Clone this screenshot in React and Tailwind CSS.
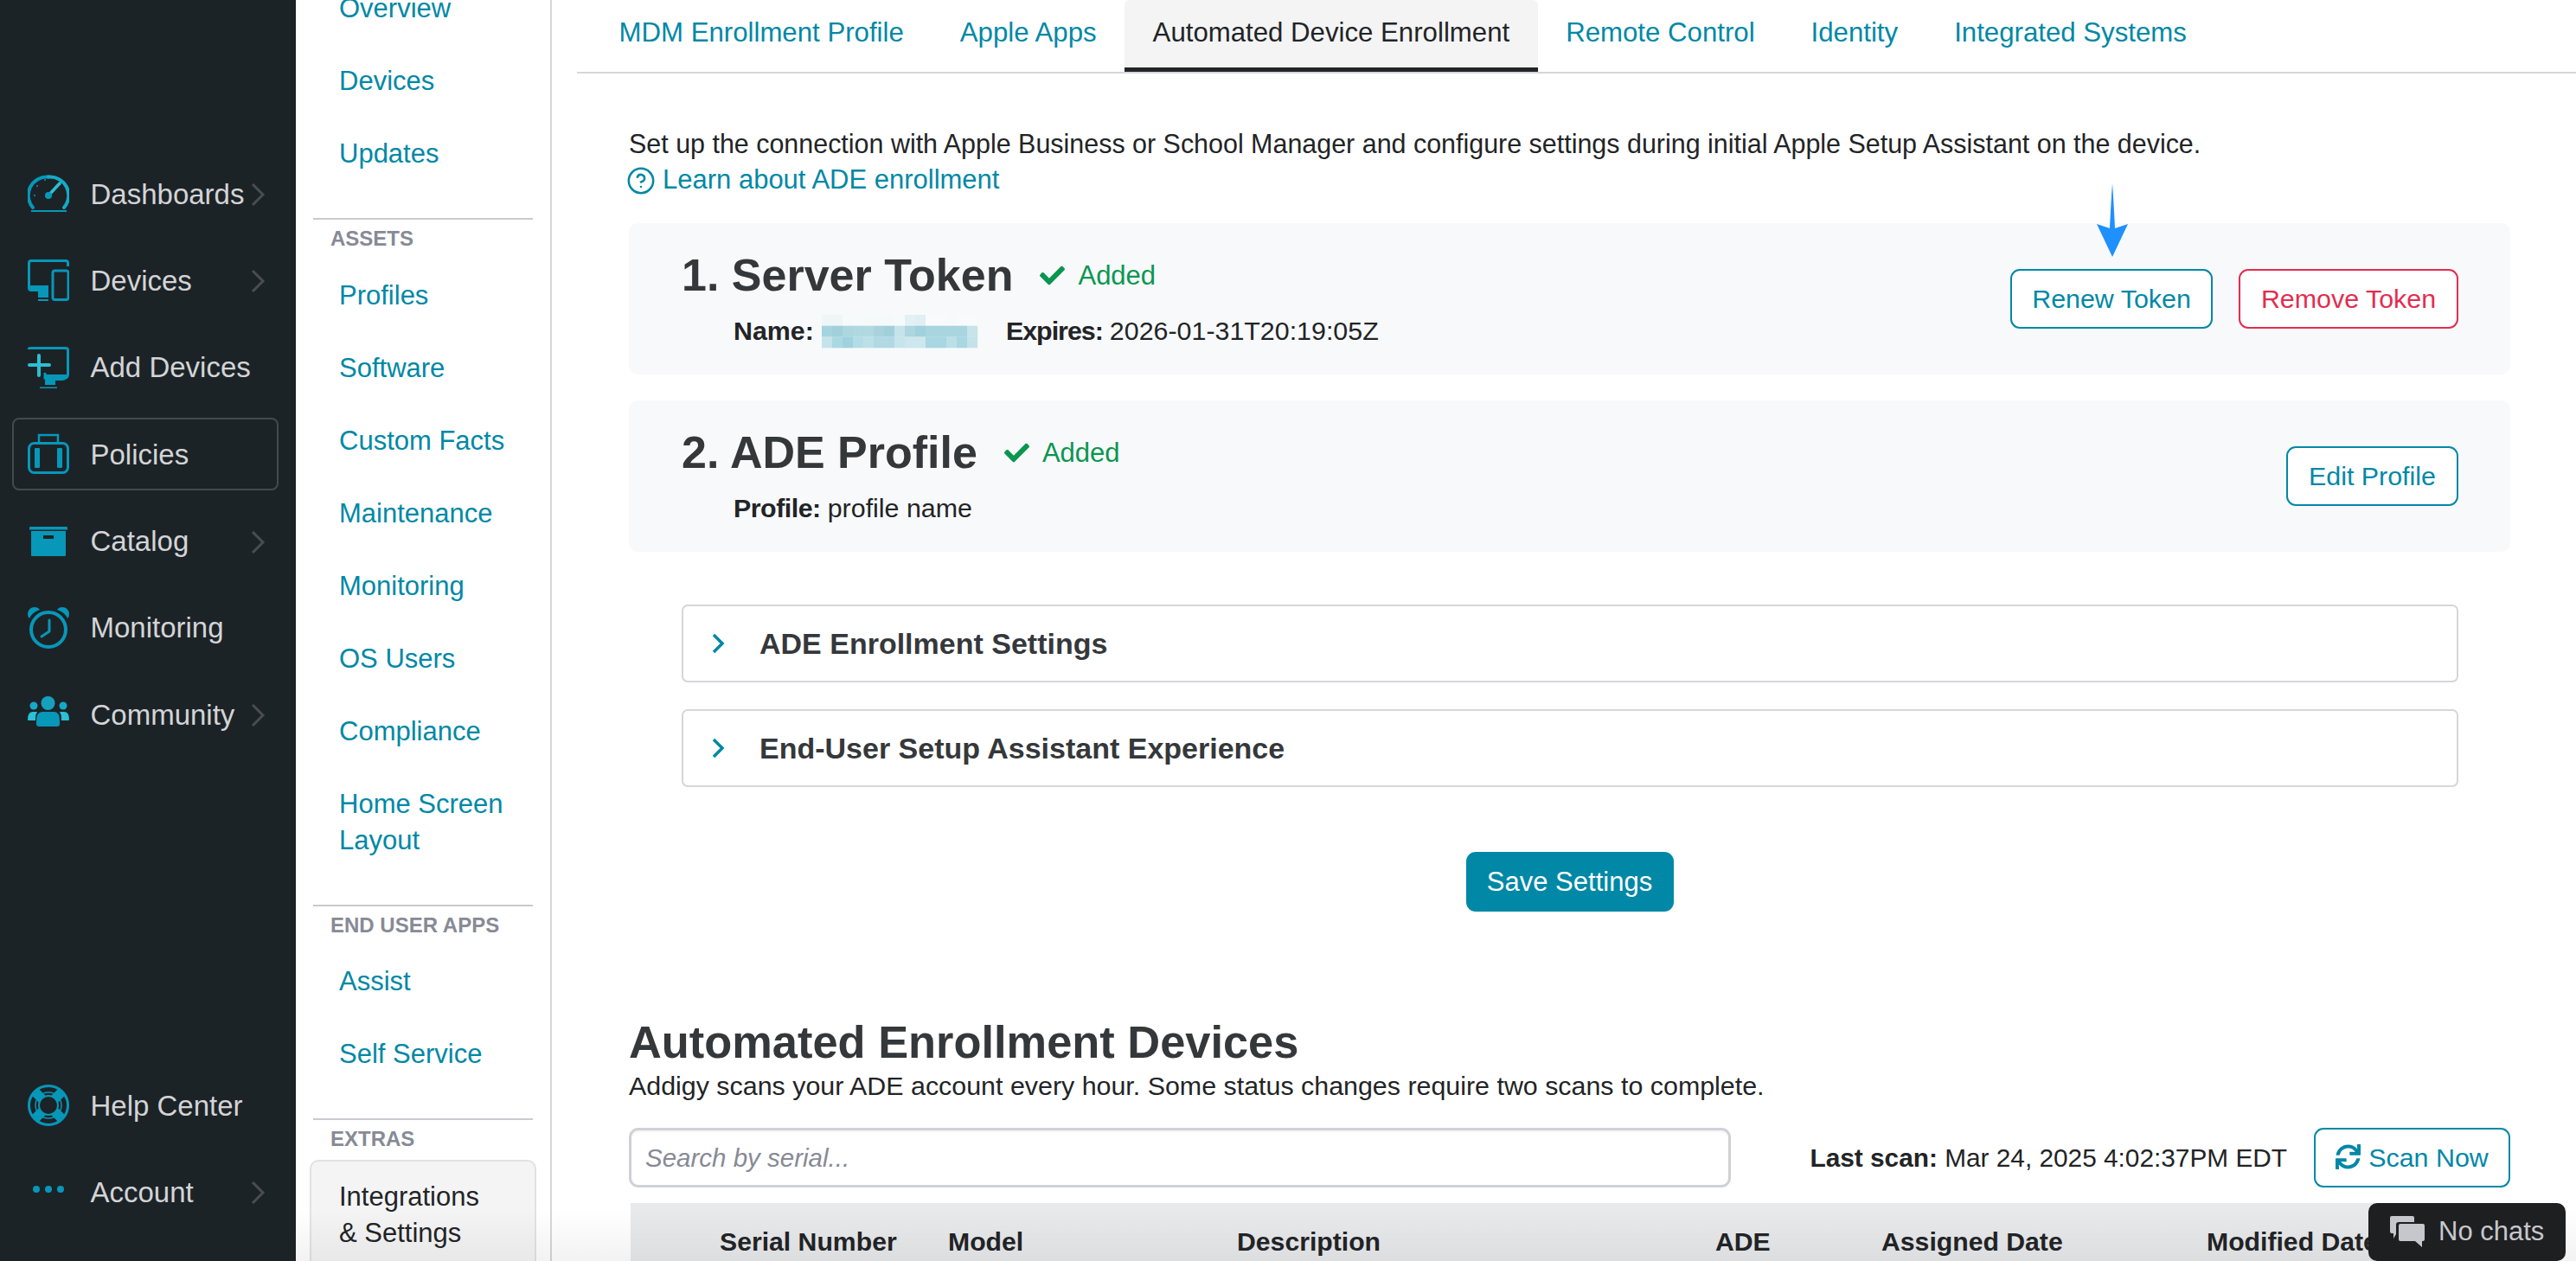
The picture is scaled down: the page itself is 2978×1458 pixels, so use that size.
import { CircleHelp } from 'lucide-react';
import { FaCheck, FaSync } from 'react-icons/fa';

const INK = '#35383b';

// sidebar icons are all drawn in a 48 box
function DashIcon() {
  return (
    <svg width="48" height="48" viewBox="0 0 48 48" fill="none">
      <path d="M6 40 A21.5 21.5 0 0 1 24 4.5" stroke="#0797b9" strokeWidth="4" strokeLinecap="round" />
      <path d="M24 4.5 A21.5 21.5 0 0 1 42 40" stroke="#16a9c6" strokeWidth="4" strokeLinecap="round" />
      <path d="M24 26 L37 12" stroke="#2bc0d4" strokeWidth="3.5" strokeLinecap="round" />
      <circle cx="24" cy="26" r="4" fill="#0797b9" />
      <circle cx="20" cy="8" r="1" fill="#0797b9" />
      <circle cx="11" cy="15" r="1" fill="#0797b9" />
      <circle cx="8" cy="26" r="1" fill="#0797b9" />
      <path d="M4 44 H45" stroke="#0797b9" strokeWidth="2" />
    </svg>
  );
}

function DevicesIcon() {
  return (
    <svg width="48" height="48" viewBox="0 0 48 48" fill="none">
      <path d="M1.5 30 V4 Q1.5 1.5 4 1.5 H44 Q46.5 1.5 46.5 4 V8" stroke="#0797b9" strokeWidth="3" />
      <path d="M0 30 H24 V44 H12 V37 H4 Q0 37 0 33 Z" fill="#0797b9" />
      <path d="M12 47 H24" stroke="#0797b9" strokeWidth="2" />
      <rect x="29" y="13" width="18" height="33.5" rx="2.5" stroke="#0797b9" strokeWidth="3" />
    </svg>
  );
}

function AddDevicesIcon() {
  return (
    <svg width="48" height="48" viewBox="0 0 48 48" fill="none">
      <path d="M1 3 Q1 1.5 4 1.5 H44 Q46.5 1.5 46.5 4 V32 Q46.5 36 42 36 H20 V30" stroke="#0797b9" strokeWidth="3" />
      <path d="M20 32 H46 Q46 39 40 39 H32 V44 H20 Z" fill="#0797b9" />
      <path d="M14 47.5 H34" stroke="#0797b9" strokeWidth="2" />
      <path d="M2 21 H25 M13 10 V33" stroke="#2bc0d4" strokeWidth="4" strokeLinecap="round" />
    </svg>
  );
}

function PoliciesIcon() {
  return (
    <svg width="48" height="48" viewBox="0 0 48 48" fill="none">
      <path d="M13 11 V2 H35 V11" stroke="#0797b9" strokeWidth="2.5" />
      <rect x="1.5" y="11.5" width="45" height="34" rx="6" stroke="#0797b9" strokeWidth="3" />
      <rect x="8" y="17" width="6" height="23" rx="1" fill="#0797b9" />
      <rect x="34" y="17" width="6" height="23" rx="1" fill="#0797b9" />
    </svg>
  );
}

function CatalogIcon() {
  return (
    <svg width="48" height="48" viewBox="0 0 48 48" fill="none">
      <path d="M2 8 Q2 7 3 7 H45 Q46 7 46 8 V10.5 H2 Z" fill="#0797b9" />
      <path d="M4 12 H44 V40 Q44 41 43 41 H5 Q4 41 4 40 Z" fill="#0797b9" />
      <rect x="18" y="17" width="12" height="4" fill="#1c2327" />
    </svg>
  );
}

function MonitoringIcon() {
  return (
    <svg width="48" height="48" viewBox="0 0 48 48" fill="none">
      <circle cx="24" cy="26" r="20" stroke="#0797b9" strokeWidth="4" />
      <path d="M0 8 Q1 0 8 0 Q12 0 14 3 Q5 6 2 13 Q0 11 0 8 Z" fill="#0797b9" />
      <path d="M48 8 Q47 0 40 0 Q36 0 34 3 Q43 6 46 13 Q48 11 48 8 Z" fill="#0797b9" />
      <path d="M25 15 V28 L16 34" stroke="#0797b9" strokeWidth="3" strokeLinecap="round" strokeLinejoin="round" />
    </svg>
  );
}

function CommunityIcon() {
  return (
    <svg width="48" height="48" viewBox="0 0 48 48" fill="none">
      <circle cx="7" cy="14" r="4.5" fill="#16a9c6" />
      <circle cx="41" cy="14" r="4.5" fill="#16a9c6" />
      <path d="M0 30 Q0 21 6 21 H11 Q9 24 9 29 V31 H1 Q0 31 0 30 Z" fill="#2bc0d4" />
      <path d="M48 30 Q48 21 42 21 H37 Q39 24 39 29 V31 H47 Q48 31 48 30 Z" fill="#2bc0d4" />
      <circle cx="23.5" cy="11" r="8" fill="#16a0c0" />
      <path d="M10 32 Q10 21 17 21 H31 Q37 21 37 32 V35 Q37 38 34 38 H13 Q10 38 10 35 Z" fill="#0797b9" />
    </svg>
  );
}

function HelpIcon() {
  return (
    <svg width="48" height="48" viewBox="0 0 48 48" fill="none">
      <circle cx="24" cy="24" r="22.5" stroke="#0797b9" strokeWidth="3" />
      <path d="M9 9 L39 39 M39 9 L9 39" stroke="#0797b9" strokeWidth="11" />
      <circle cx="24" cy="24" r="15" stroke="#0797b9" strokeWidth="1.5" />
      <circle cx="24" cy="24" r="11" fill="#1c2327" stroke="#0797b9" strokeWidth="2" />
    </svg>
  );
}

function AccountIcon() {
  return (
    <svg width="48" height="48" viewBox="0 0 48 48" fill="#0797b9">
      <circle cx="10" cy="21" r="4" />
      <circle cx="24" cy="21" r="4" />
      <circle cx="38" cy="21" r="4" />
    </svg>
  );
}

const TOP_ITEMS = [
  { label: 'Dashboards', icon: DashIcon, arrow: true },
  { label: 'Devices', icon: DevicesIcon, arrow: true },
  { label: 'Add Devices', icon: AddDevicesIcon },
  { label: 'Policies', icon: PoliciesIcon, active: true },
  { label: 'Catalog', icon: CatalogIcon, arrow: true },
  { label: 'Monitoring', icon: MonitoringIcon },
  { label: 'Community', icon: CommunityIcon, arrow: true },
];

const BOTTOM_ITEMS = [
  { label: 'Help Center', icon: HelpIcon },
  { label: 'Account', icon: AccountIcon, arrow: true },
];

function SideItem({ item }) {
  const Icon = item.icon;
  return (
    <div
      className={`relative flex h-[84px] items-center rounded-[8px] border-[2.5px] pl-[16px] ${
        item.active ? 'border-[#45494d]' : 'border-transparent'
      }`}
    >
      <Icon />
      <span className="ml-[24.5px] text-[33px] leading-none text-[#d3d4d6]">{item.label}</span>
      {item.arrow && (
        <svg className="absolute left-[273px] top-[27px]" width="18" height="28" viewBox="0 0 18 28" fill="none">
          <path d="M3 2 L15 14 L3 26" stroke="#4a4d50" strokeWidth="3" />
        </svg>
      )}
    </div>
  );
}

function Sidebar() {
  return (
    <aside className="flex h-full w-[342px] shrink-0 flex-col bg-[#1c2327] pl-[14px] pr-[20px] pt-[182px] pb-[38px]">
      <div className="flex flex-col gap-[16.4px]">
        {TOP_ITEMS.map(item => <SideItem key={item.label} item={item} />)}
      </div>
      <div className="mt-auto flex flex-col gap-[16px]">
        {BOTTOM_ITEMS.map(item => <SideItem key={item.label} item={item} />)}
      </div>
    </aside>
  );
}

function NavLink({ children }) {
  return <a className="block py-[21px] pl-[50px] pr-[16px] text-[31px] leading-[42px] text-[#0088a6]">{children}</a>;
}

function NavSection({ title }) {
  return (
    <div className="mx-[20px] mt-[32px] h-[47.5px] border-t-[2.5px] border-[#c9cacf] pl-[20px] pt-[6px] text-[24px] font-bold uppercase leading-[32px] text-[#878a96]">
      {title}
    </div>
  );
}

function SubNav() {
  return (
    <nav className="h-full w-[296px] shrink-0 overflow-hidden border-r-[2.5px] border-[#d5d6d9] bg-white">
      <div className="-mt-[32px]">
        <NavLink>Overview</NavLink>
        <NavLink>Devices</NavLink>
        <NavLink>Updates</NavLink>
        <NavSection title="Assets" />
        <NavLink>Profiles</NavLink>
        <NavLink>Software</NavLink>
        <NavLink>Custom Facts</NavLink>
        <NavLink>Maintenance</NavLink>
        <NavLink>Monitoring</NavLink>
        <NavLink>OS Users</NavLink>
        <NavLink>Compliance</NavLink>
        <NavLink>Home Screen Layout</NavLink>
        <NavSection title="End User Apps" />
        <NavLink>Assist</NavLink>
        <NavLink>Self Service</NavLink>
        <NavSection title="Extras" />
        <div className="mx-[16px] rounded-[10px] border-[2.5px] border-[#e2e2e4] bg-[#f4f4f5] px-[32px] py-[20px] text-[31px] leading-[42px] text-[#222426]">
          Integrations<br />& Settings
        </div>
      </div>
    </nav>
  );
}

const TABS = ['MDM Enrollment Profile', 'Apple Apps', 'Automated Device Enrollment', 'Remote Control', 'Identity', 'Integrated Systems'];

function Tabs() {
  return (
    <div className="ml-[29px] flex h-[85px] border-b-[2.5px] border-[#d5d6d9] pl-[16px]">
      {TABS.map(t => {
        const active = t === 'Automated Device Enrollment';
        return (
          <div
            key={t}
            className={`h-[83px] whitespace-nowrap rounded-t-[6px] px-[32.5px] pb-[7px] text-[31.2px] leading-[76px] ${
              active ? 'border-b-[5px] border-[#222426] bg-[#f4f4f5] text-[#222426]' : 'text-[#0088a6]'
            }`}
          >
            {t}
          </div>
        );
      })}
    </div>
  );
}

function Btn({ children, red, className = '' }) {
  return (
    <button
      className={`flex h-[69px] items-center justify-center rounded-[11px] border-[2.5px] bg-white text-[30.4px] ${
        red ? 'border-[#e22d50] text-[#e22d50]' : 'border-[#0088a6] text-[#0088a6]'
      } ${className}`}
    >
      {children}
    </button>
  );
}

function Added() {
  return (
    <span className="ml-[31px] flex items-center text-[31px] font-normal leading-none text-[#0a9650]">
      <FaCheck size={29} className="mr-[15px]" />
      Added
    </span>
  );
}

function Step({ title, children, actions }) {
  return (
    <div className="flex h-[175px] justify-between rounded-[10px] bg-[#f8f9fb] pl-[61px] pr-[60px]">
      <div>
        <div className="mt-[30px] flex h-[60px] items-center text-[52px] font-bold leading-none" style={{ color: INK }}>
          {title}
          <Added />
        </div>
        <div className="ml-[60px] mt-[10px] flex h-[50px] items-center text-[30.4px] text-[#222426]">{children}</div>
      </div>
      <div className="mt-[53px] flex items-start gap-[30px]">{actions}</div>
    </div>
  );
}

function Accordion({ title }) {
  return (
    <div className="flex h-[90px] items-center rounded-[7px] border-[2.5px] border-[#d5d6d9] pl-[32px] text-[34px] font-bold" style={{ color: INK }}>
      <svg width="16" height="24" viewBox="0 0 16 24" fill="none" className="mr-[40px] shrink-0">
        <path d="M3 2 L13 12 L3 22" stroke="#0088a6" strokeWidth="3.5" />
      </svg>
      {title}
    </div>
  );
}

// the blurred-out token name, a small mosaic
const MOSAIC = [
  ['#eef6f8', '#eef6f8', '#f6fafb', '#f6fafb', '#f4f9fa', '#f4f9fa', '#f4f9fa', '#f6fafb', '#e4f1f4', '#e0eff3', '#f8fafc', '#f8fafc', '#f6fafb', '#f8fafc', '#f8fafc'],
  ['#a4d4df', '#a0d0dc', '#acd7e0', '#b0d8e1', '#b2d9e2', '#a8d3de', '#a0d0dc', '#c6e3ea', '#acd6e0', '#a0d1dd', '#a8d5e0', '#a8d5e0', '#a8d5e0', '#a8d5e0', '#c8e3ea'],
  ['#c4e4eb', '#acd8e2', '#9ed2de', '#b4dce5', '#bce0e8', '#b0d9e3', '#b0d9e3', '#c6e4eb', '#cce7ed', '#cce7ed', '#a8d6e1', '#a8d6e1', '#bcdfe7', '#a8d6e1', '#c4e2e9'],
];

function Mosaic() {
  return (
    <svg width="199" height="39" viewBox="0 0 199 39" className="ml-[9px] shrink-0">
      {MOSAIC.map((row, y) => row.map((c, x) => (
        <rect key={`${x}-${y}`} x={x * 12} y={y * 12.7} width="12.2" height="12.9" fill={c} />
      )))}
    </svg>
  );
}

const COLUMNS = [
  ['Serial Number', 'w-[264px]'],
  ['Model', 'w-[334px]'],
  ['Description', 'w-[553px]'],
  ['ADE', 'w-[192px]'],
  ['Assigned Date', 'w-[376px]'],
  ['Modified Date', 'w-[160px]'],
];

function Main() {
  return (
    <main className="relative h-full min-w-0 flex-1 overflow-hidden bg-white">
      <Tabs />
      <svg className="absolute left-[1786px] top-[212px]" width="36" height="85" viewBox="0 0 36 85" fill="#1e90ff">
        <path d="M18 0 Q19.5 20 21 52 L36 47 L18 85 L0 47 L15 52 Q16.5 20 18 0 Z" />
      </svg>
      <div className="ml-[89px] mr-[76px]">
        <p className="mt-[60px] whitespace-nowrap text-[30.45px] leading-[42px] text-[#222426]">
          Set up the connection with Apple Business or School Manager and configure settings during initial Apple Setup Assistant on the device.
        </p>
        <a className="flex h-[42px] items-center text-[31px] text-[#0088a6]">
          <CircleHelp size={34} strokeWidth={1.8} className="-ml-[3px] mr-[8px] mt-[2px]" />
          Learn about ADE enrollment
        </a>

        <div className="mt-[29px] flex flex-col gap-[30px]">
          <Step
            title="1. Server Token"
            actions={
              <>
                <Btn className="w-[234px]">Renew Token</Btn>
                <Btn red className="w-[254px]">Remove Token</Btn>
              </>
            }
          >
            <b className="font-bold">Name:</b>
            <Mosaic />
            <b className="ml-[14px] font-bold tracking-[-1px]">Expires:</b>
            <span className="ml-[8px]">2026-01-31T20:19:05Z</span>
          </Step>
          <Step title="2. ADE Profile" actions={<Btn className="w-[199px]">Edit Profile</Btn>}>
            <b className="font-bold tracking-[-0.5px]">Profile:</b>
            <span className="ml-[8px]">profile name</span>
          </Step>
        </div>

        <div className="ml-[61px] mr-[60px] mt-[61px] flex flex-col gap-[31px]">
          <Accordion title="ADE Enrollment Settings" />
          <Accordion title="End-User Setup Assistant Experience" />
        </div>

        <div className="mt-[75px] flex justify-center">
          <button className="h-[69px] w-[240px] rounded-[11px] bg-[#0088a6] pt-[2px] text-[31px] font-medium text-white">Save Settings</button>
        </div>

        <h2 className="mt-[120px] whitespace-nowrap text-[52.4px] font-bold leading-[62px]" style={{ color: INK }}>Automated Enrollment Devices</h2>
        <p className="mt-[2px] whitespace-nowrap text-[30.4px] leading-[34px] text-[#222426]">
          Addigy scans your ADE account every hour. Some status changes require two scans to complete.
        </p>

        <div className="mt-[32px] flex h-[69px] items-center">
          <input
            readOnly
            placeholder="Search by serial..."
            className="h-full w-[1274px] rounded-[11px] border-[3px] border-[#d0d1d6] bg-white pl-[16px] text-[29.5px] italic shadow-[inset_0_2px_2px_rgba(0,0,0,0.05)] outline-none placeholder:text-[#878a96]"
          />
          <div className="ml-auto whitespace-nowrap pt-[2px] text-[29.8px] text-[#222426]">
            <b className="font-bold">Last scan:</b> Mar 24, 2025 4:02:37PM EDT
          </div>
          <Btn className="ml-[31px] w-[227px] shrink-0">
            <FaSync size={29} className="mr-[9px] -mt-[3px]" />
            Scan Now
          </Btn>
        </div>

        <div className="mx-[2px] mt-[18px] flex h-[80px] bg-[#e8e9eb] pl-[103px] text-[30.2px] font-bold leading-[90px] text-[#222426]">
          {COLUMNS.map(([name, w]) => (
            <span key={name} className={`${w} shrink-0 whitespace-nowrap`}>{name}</span>
          ))}
        </div>
      </div>
    </main>
  );
}

export default function App() {
  return (
    <div className="relative flex h-[1458px] w-[2978px] overflow-hidden bg-white [font-family:Liberation_Sans,Arial,sans-serif]">
      <Sidebar />
      <SubNav />
      <Main />
      <div className="pointer-events-none absolute bottom-0 left-[342px] right-0 h-[60px] bg-gradient-to-t from-black/5 to-transparent" />
      <div className="absolute bottom-0 right-[12px] flex h-[67px] w-[228px] items-center rounded-[10px] bg-[#1e1f21] pl-[25px] text-[31px] text-[#c6c7cc]">
        <svg width="40" height="37" viewBox="0 0 40 37" fill="#c6c7cc" className="mr-[16px] shrink-0">
          <path d="M2 0 H26 Q28 0 28 2 V7 H10 Q7 7 7 10 V21 L4 26 V20 H2 Q0 20 0 18 V2 Q0 0 2 0 Z" />
          <path d="M12 9 H38 Q40 9 40 11 V27 Q40 29 38 29 H37 V36 L29 29 H12 Q10 29 10 27 V11 Q10 9 12 9 Z" />
        </svg>
        No chats
      </div>
    </div>
  );
}
